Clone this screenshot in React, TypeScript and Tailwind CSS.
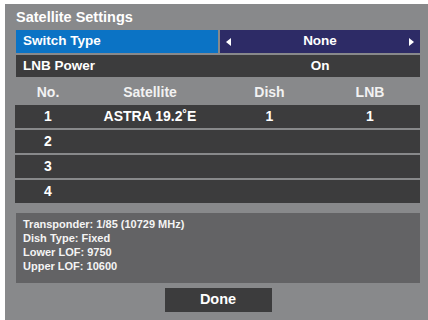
import React from "react";

const rows = [
  { no: "1", sat: "ASTRA 19.2˚E", dish: "1", lnb: "1" },
  { no: "2", sat: "", dish: "", lnb: "" },
  { no: "3", sat: "", dish: "", lnb: "" },
  { no: "4", sat: "", dish: "", lnb: "" },
];

function Cols({ a, b, c, d, cls }: { a: string; b: string; c: string; d: string; cls: string }) {
  return (
    <div className={`grid grid-cols-[66px_138px_101px_100px] items-center ${cls}`}>
      <div className="text-center">{a}</div>
      <div className="text-center">{b}</div>
      <div className="text-center">{c}</div>
      <div className="text-center">{d}</div>
    </div>
  );
}

export default function App() {
  return (
    <div
      className="w-[428px] h-[320px] bg-white pl-[5px] pt-[4px] flex"
      style={{ fontFamily: '"Liberation Sans", Arial, sans-serif' }}
    >
      <div className="flex-1 bg-[#88898b] pl-[10px] pr-[8px] flex flex-col font-bold text-white">
        <div className="h-[26px] flex items-center pl-[1px] text-[14.5px] pt-[1px]">Satellite Settings</div>
        <div className="h-[23px] flex ml-[1px]">
          <div className="w-[202px] bg-[#0b73c5] flex items-center pl-[7px] text-[13.5px]">Switch Type</div>
          <div className="w-[2px]" />
          <div className="flex-1 bg-[#2d2b66] flex items-center justify-between px-[6px] text-[13.5px]">
            <svg width="5" height="8" viewBox="0 0 5 8"><polygon points="5,0 5,8 0,4" fill="white" /></svg>
            <span>None</span>
            <svg width="5" height="8" viewBox="0 0 5 8"><polygon points="0,0 0,8 5,4" fill="white" /></svg>
          </div>
        </div>
        <div className="h-[22px] mt-[2px] ml-[1px] flex bg-[#3c3c3d] text-[13.5px]">
          <div className="w-[204px] flex items-center pl-[7px]">LNB Power</div>
          <div className="flex-1 flex items-center justify-center">On</div>
        </div>
        <Cols a="No." b="Satellite" c="Dish" d="LNB" cls="h-[28px] text-[14px] text-[#f2f2f2] pt-[3px]" />
        <div className="flex flex-col gap-[2px]">
          {rows.map((r) => (
            <Cols key={r.no} a={r.no} b={r.sat} c={r.dish} d={r.lnb} cls="h-[23px] bg-[#3c3c3d] text-[14px]" />
          ))}
        </div>
        <div className="mt-[10px] ml-[1px] h-[70px] bg-[#636365] px-[7px] pt-[4px] text-[11px] leading-[14px] text-[#f4f4f4]">
          <div>Transponder: 1/85 (10729 MHz)</div>
          <div>Dish Type: Fixed</div>
          <div>Lower LOF: 9750</div>
          <div>Upper LOF: 10600</div>
        </div>
        <div className="flex justify-center mt-[5px] ml-[1px]">
          <div className="w-[107px] h-[24px] bg-[#3c3c3d] flex items-center justify-center text-[14.5px]">Done</div>
        </div>
      </div>
    </div>
  );
}
